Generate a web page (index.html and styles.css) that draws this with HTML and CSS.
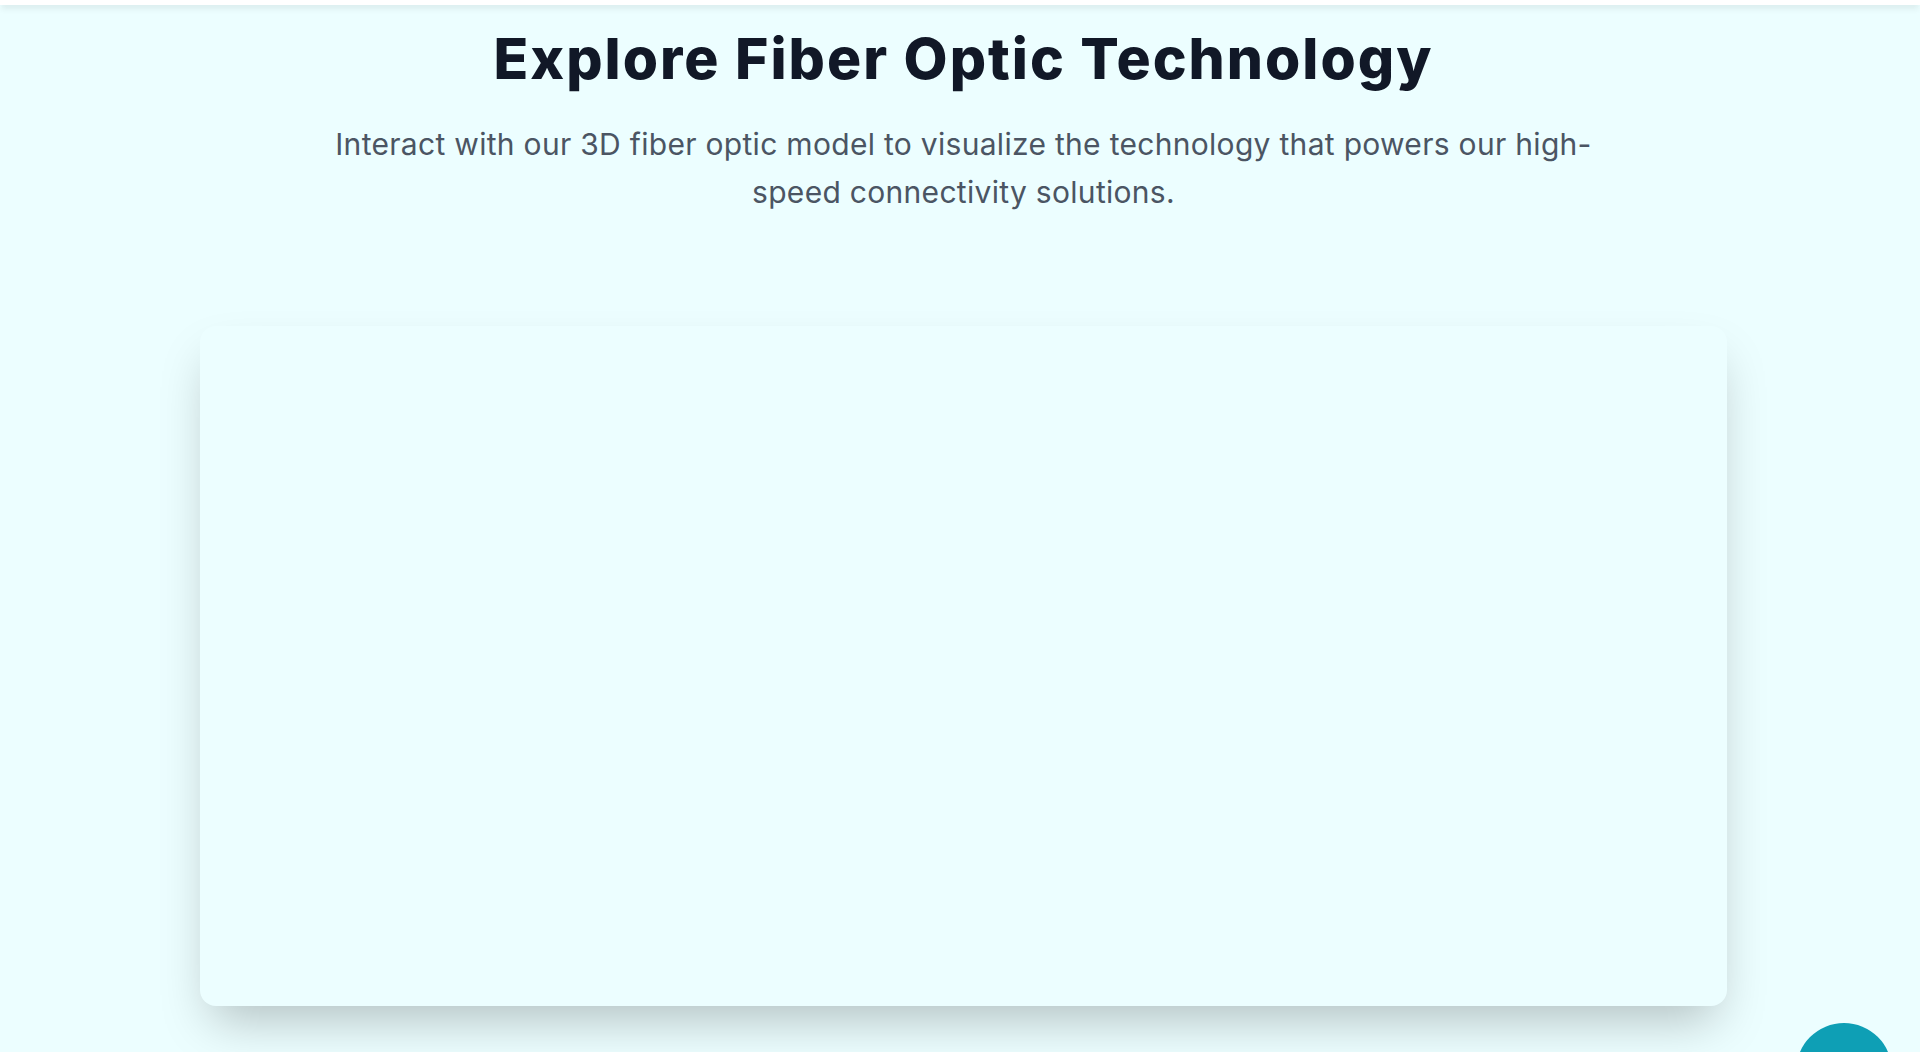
FILE: index.html
```html
<!DOCTYPE html>
<html lang="en">
<head>
<meta charset="utf-8">
<title>Explore Fiber Optic Technology</title>
<link rel="stylesheet" href="styles.css">
</head>
<body>
<header class="topbar"></header>
<main class="section">
  <h1 class="title">Explore Fiber Optic Technology</h1>
  <p class="subtitle">Interact with our 3D fiber optic model to visualize the technology that powers our high-speed connectivity solutions.</p>
  <div class="viewer"></div>
</main>
<button class="fab" aria-label="Open chat"></button>
</body>
</html>
```

FILE: styles.css
```css
html, body {
  margin: 0;
  padding: 0;
  height: 100%;
  overflow: hidden;
}
body {
  background: #ecfeff;
  font-family: Inter, "Noto Sans", sans-serif;
}
.topbar {
  height: 5px;
  background: #ffffff;
  box-shadow: 0 4px 6px -1px rgba(0,0,0,0.12), 0 2px 4px -2px rgba(0,0,0,0.1);
  position: relative;
  z-index: 2;
}
.section {
  display: flex;
  flex-direction: column;
  align-items: center;
  padding: 20px 0 0 7px;
}
.title {
  margin: 0;
  font-size: 57px;
  line-height: 67px;
  font-weight: 800;
  color: #111827;
  letter-spacing: 2px;
}
.subtitle {
  margin: 28px 0 0;
  max-width: 1280px;
  text-align: center;
  font-size: 30px;
  line-height: 48px;
  color: #4b5563;
  letter-spacing: 0.3px;
}
.viewer {
  margin-top: 110px;
  width: 1527px;
  height: 680px;
  flex-shrink: 0;
  border-radius: 16px;
  background: #ecfeff;
  box-shadow: 0 25px 50px -12px rgba(0,0,0,0.25);
}
.fab {
  position: fixed;
  right: 28px;
  top: 1023px;
  width: 96px;
  height: 96px;
  border-radius: 50%;
  border: none;
  background: #0e9fb5;
  padding: 0;
}
```
